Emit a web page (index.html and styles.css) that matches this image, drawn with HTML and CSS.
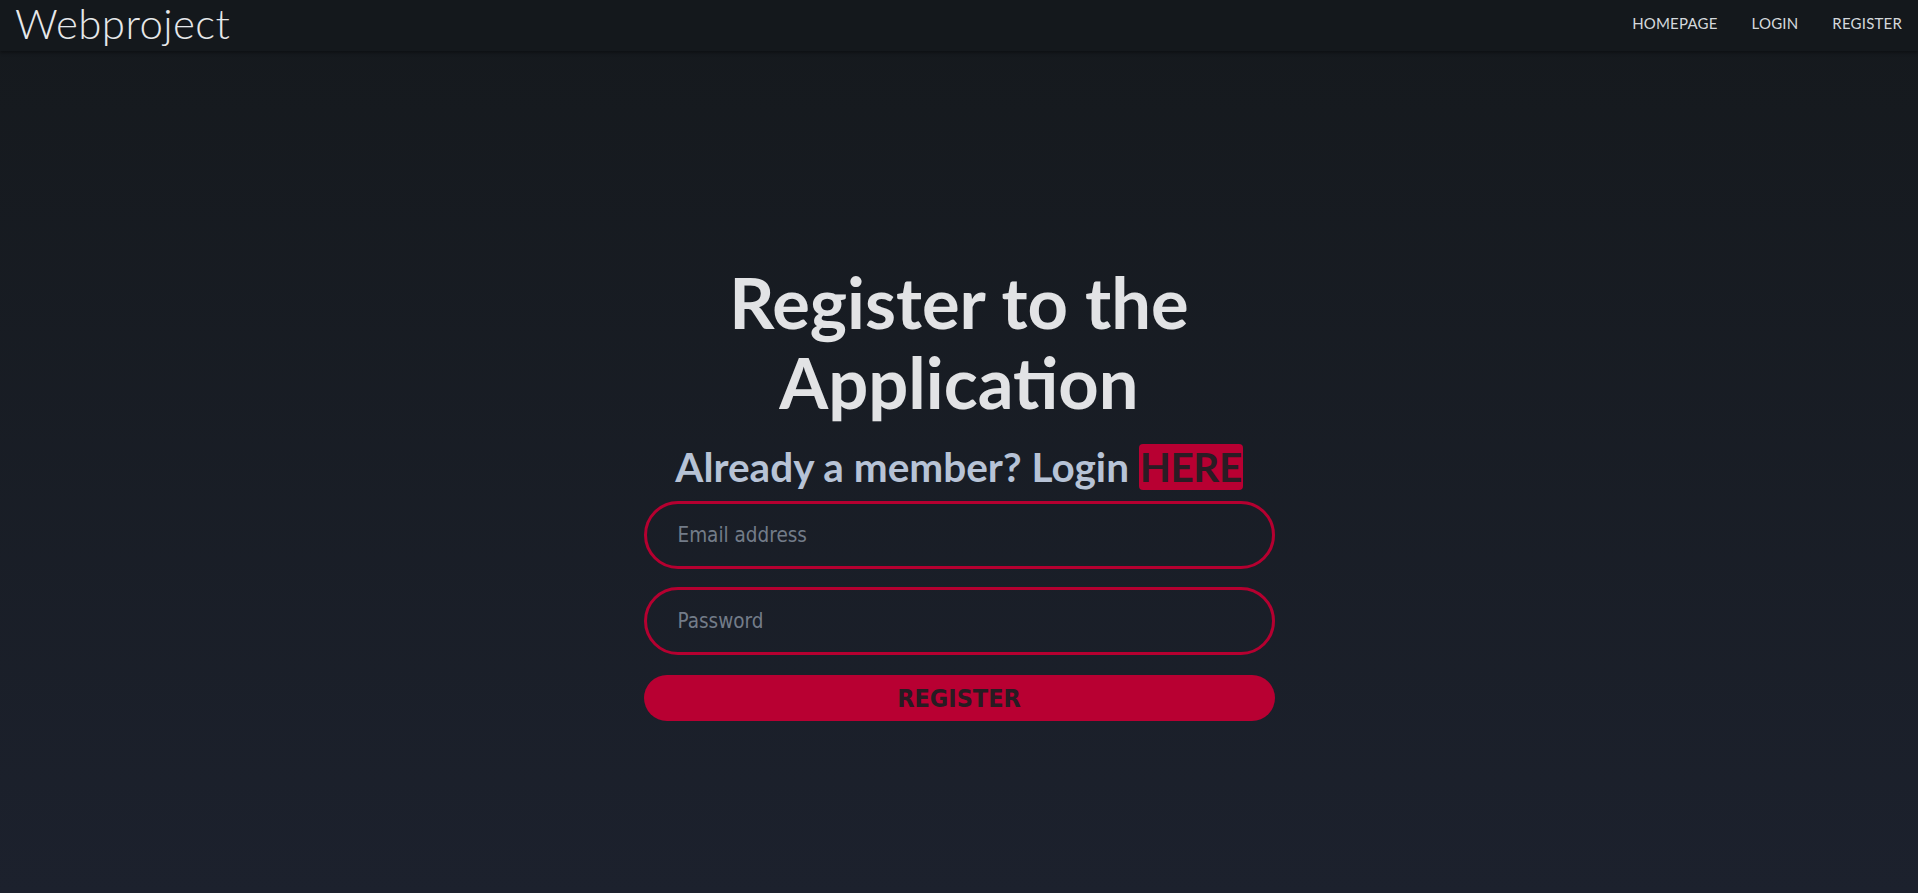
FILE: index.html
```html
<!DOCTYPE html>
<html lang="en">
<head>
<meta charset="utf-8">
<title>Webproject - Register</title>
<link rel="stylesheet" href="styles.css">
</head>
<body>
<header class="navbar">
  <a class="brand" href="#">Webproject</a>
  <nav class="nav-links">
    <a href="#">HOMEPAGE</a>
    <a href="#">LOGIN</a>
    <a href="#">REGISTER</a>
  </nav>
</header>
<main class="main">
  <section class="register">
    <h1 class="title">Register to the<br>Application</h1>
    <h2 class="subtitle">Already a member? Login <a class="here" href="#">HERE</a></h2>
    <form class="form">
      <input class="field" type="email" placeholder="Email address">
      <input class="field" type="password" placeholder="Password">
      <button class="submit" type="button">REGISTER</button>
    </form>
  </section>
</main>
</body>
</html>
```
FILE: styles.css
```css
* { box-sizing: border-box; }
html, body { margin: 0; height: 100%; }
body {
  background: linear-gradient(180deg, #15191d 0%, #1c212d 100%);
  font-family: Lato, "Noto Sans", sans-serif;
  color: #e0e0e0;
  min-height: 100vh;
}
.navbar {
  height: 51px;
  display: flex;
  align-items: flex-start;
  justify-content: space-between;
  padding: 0 16px 0 15px;
  background: #14181c;
  box-shadow: 0 2px 3px rgba(0,0,0,0.35);
}
.brand {
  font-size: 42px;
  font-weight: 300;
  letter-spacing: 0.4px;
  color: #e6e8ea;
  text-decoration: none;
  line-height: 1;
  margin-top: 2px;
}
.nav-links { display: flex; gap: 34px; padding-top: 14px; }
.nav-links a {
  color: #d4d8dc;
  text-decoration: none;
  font-size: 15px;
  line-height: 18px;
  letter-spacing: 0.2px;
}
.main {
  display: flex;
  justify-content: center;
  padding-top: 211px;
}
.register {
  width: 631px;
  display: flex;
  flex-direction: column;
  align-items: center;
}
.title {
  margin: 0;
  font-size: 70.5px;
  line-height: 80px;
  font-weight: 700;
  text-align: center;
  color: #e2e3e5;
}
.subtitle {
  margin: 21px 0 10px;
  font-size: 40.5px;
  line-height: 48px;
  font-weight: 700;
  color: #b7c3d6;
  text-align: center;
}
.here {
  display: inline-block;
  background: #b80032;
  color: #2a1c24;
  border-radius: 4px;
  padding: 0 1px;
  line-height: 46px;
  letter-spacing: -0.5px;
  text-decoration: none;
}
.form {
  width: 100%;
  display: flex;
  flex-direction: column;
}
.field {
  height: 68px;
  width: 100%;
  border: 3px solid #b50030;
  border-radius: 34px;
  background: transparent;
  padding: 0 31px;
  font-family: "DejaVu Sans Condensed", "DejaVu Sans", sans-serif;
  font-size: 20.5px;
  color: #c8ccd2;
  margin-bottom: 18px;
  outline: none;
}
.field::placeholder { color: #737c89; }
.submit {
  margin-top: 2px;
  height: 46px;
  width: 100%;
  border: none;
  border-radius: 23px;
  background: #b80032;
  color: #271c22;
  font-family: "DejaVu Sans Condensed", "DejaVu Sans", sans-serif;
  font-weight: 700;
  font-size: 25px;
}
```
